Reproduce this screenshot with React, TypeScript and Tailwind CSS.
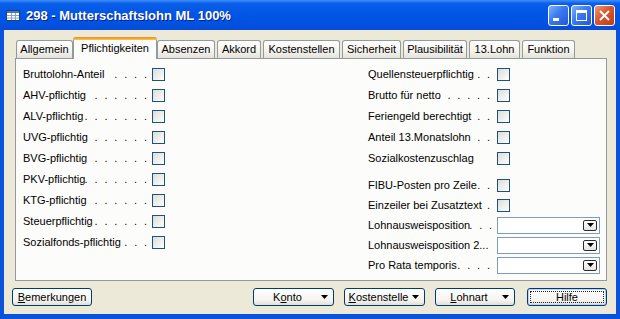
import React from "react";

const tabs = [
  { label: "Allgemein", className: "w-[57px]" },
  { label: "Pflichtigkeiten", className: "w-[84px]", active: true },
  { label: "Absenzen", className: "w-[58px]" },
  { label: "Akkord", className: "w-[44px] ml-[2px]" },
  { label: "Kostenstellen", className: "w-[77px] ml-[2px]" },
  { label: "Sicherheit", className: "w-[59px] ml-[2px]" },
  { label: "Plausibilität", className: "w-[64px] ml-[2px]" },
  { label: "13.Lohn", className: "w-[51px] ml-[2px]" },
  { label: "Funktion", className: "w-[53px] ml-[2px]" },
];

// label + number of leader dots shown after it
const leftRows: [string, number][] = [
  ["Bruttolohn-Anteil", 4],
  ["AHV-pflichtig", 6],
  ["ALV-pflichtig", 7],
  ["UVG-pflichtig", 6],
  ["BVG-pflichtig", 6],
  ["PKV-pflichtig", 7],
  ["KTG-pflichtig", 6],
  ["Steuerpflichtig", 6],
  ["Sozialfonds-pflichtig", 3],
];

const rightTop: [string, number][] = [
  ["Quellensteuerpflichtig", 2],
  ["Brutto für netto", 6],
  ["Feriengeld berechtigt", 2],
  ["Anteil 13.Monatslohn", 2],
  ["Sozialkostenzuschlag", 0],
];

const Arrow = () => (
  <svg width="7" height="4" viewBox="0 0 7 4" className="shrink-0">
    <path d="M0 0h7L3.5 4z" fill="#000" />
  </svg>
);

const Dots = ({ n, pad }: { n: number; pad: string }) => (
  <div className={`flex-1 min-w-0 flex justify-end ${pad}`}>
    {n > 0 && (
      <span className="whitespace-pre tracking-[1.9px]">{Array(n).fill(".").join(" ")}</span>
    )}
  </div>
);

const CheckBox = () => (
  <div className="w-[13px] h-[13px] shrink-0 border border-[#1c5180] bg-[linear-gradient(135deg,#dcdcd7,#f4f4f1_70%,#ffffff)]" />
);

const Row = ({ label, dots, pad, h = "h-[21px]", children }: { label: string; dots: number; pad: string; h?: string; children: React.ReactNode }) => (
  <div className={`flex items-center ${h}`}>
    <div className="w-[129px] flex items-center">
      <span className="whitespace-nowrap">{label}</span>
      <Dots n={dots} pad={pad} />
    </div>
    {children}
  </div>
);

const Combo = () => (
  <div className="w-[103px] h-[17px] border border-[#7f9db9] bg-white flex items-center justify-end pr-[2px]">
    <div className="w-[14px] h-[11px] rounded-[2px] border border-[#2b2b2b] bg-[linear-gradient(to_bottom,#ffffff,#e4e4e0)] flex items-center justify-center">
      <Arrow />
    </div>
  </div>
);

const Tab = ({ label, className, active }: { label: string; className: string; active?: boolean }) =>
  active ? (
    <div className={`relative z-10 h-[22px] ${className} flex flex-col rounded-t-[3px] border-x border-[#919b9c] bg-[#fcfcfa]`}>
      <div className="-mx-px h-[3px] rounded-t-[3px] bg-[linear-gradient(to_bottom,#e68b2c,#ffc73c)]" />
      <div className="flex-1 flex items-center justify-center pb-[2px]">{label}</div>
    </div>
  ) : (
    <div className={`mt-[3px] h-[18px] ${className} flex items-center justify-center rounded-t-[3px] border border-b-0 border-[#919b9c] bg-[linear-gradient(to_bottom,#ffffff,#f4f3ee_60%,#e4e2da)]`}>
      {label}
    </div>
  );

const btn = "h-[18px] flex items-center rounded-[3px] border border-[#003c74] bg-[linear-gradient(to_bottom,#ffffff,#f5f4f0_70%,#e2dfd5)]";

const MenuButton = ({ className, children }: { className: string; children: React.ReactNode }) => (
  <div className={`${btn} ${className}`}>
    <span className="flex-1 text-center whitespace-nowrap">{children}</span>
    <span className="mr-[5px]"><Arrow /></span>
  </div>
);

const CapButton = ({ kind }: { kind: "min" | "max" | "close" }) => (
  <div
    className={`w-[21px] h-[21px] rounded-[3px] border border-white ${
      kind === "close"
        ? "bg-[linear-gradient(135deg,#ee9a78,#d9572f_45%,#c23c15)]"
        : "bg-[linear-gradient(135deg,#7fb1fb,#3b79ee_45%,#2257d9)]"
    }`}
  >
    <svg width="19" height="19" viewBox="0 0 19 19">
      {kind === "min" && <rect x="4" y="12" width="6" height="3" fill="#fff" />}
      {kind === "max" && (
        <g fill="none" stroke="#fff">
          <rect x="4.5" y="4.5" width="10" height="10" />
          <rect x="4" y="4" width="11" height="3" fill="#fff" stroke="none" />
        </g>
      )}
      {kind === "close" && (
        <g stroke="#fff" strokeWidth="2">
          <path d="M5 5l9 9M14 5l-9 9" />
        </g>
      )}
    </svg>
  </div>
);

export default function App() {
  return (
    <div className="w-[620px] h-[319px] flex flex-col bg-[#0c53dc] font-['Liberation_Sans',Arial,sans-serif] text-[11px] text-black">
      {/* title bar */}
      <div className="h-[30px] shrink-0 flex items-center bg-[linear-gradient(to_bottom,#3d8ef7,#0a5eea_12%,#0055e5_50%,#0151e0_85%,#0a4bd2)]">
        <svg width="14" height="11" viewBox="0 0 14 11" className="ml-[6px]">
          <rect x="0.5" y="0.5" width="13" height="10" fill="#fff" stroke="#23407a" />
          <rect x="1" y="1" width="12" height="2" fill="#4a78c0" />
          <path d="M1 5.5h12M1 8h12M5.5 3v7M9.5 3v7" stroke="#8aa3c8" />
        </svg>
        <span className="ml-[6px] pt-[1px] text-[13px] font-bold text-white [text-shadow:1px_1px_0_#0a1e8a]">
          298 - Mutterschaftslohn ML 100%
        </span>
        <div className="ml-auto mr-[5px] flex gap-[2px]">
          <CapButton kind="min" />
          <CapButton kind="max" />
          <CapButton kind="close" />
        </div>
      </div>

      {/* frame + client */}
      <div className="flex-1 flex px-[4px] pb-[5px]">
        <div className="flex-1 flex flex-col bg-[#ece9d8] pt-[7px]">
          <div className="ml-[12px] h-[21px] flex items-start">
            {tabs.map((t) => (
              <Tab key={t.label} {...t} />
            ))}
          </div>

          <div className="ml-[11px] w-[592px] h-[223px] border border-[#919b9c] bg-[#fcfcfa] flex pt-[5px] pl-[7px]">
            <div className="w-[345px] flex flex-col">
              {leftRows.map(([l, n]) => (
                <Row key={l} label={l} dots={n} pad="pr-[3px]">
                  <CheckBox />
                </Row>
              ))}
            </div>
            <div className="w-[232px] flex flex-col">
              {rightTop.map(([l, n]) => (
                <Row key={l} label={l} dots={n} pad="pr-[5px]">
                  <CheckBox />
                </Row>
              ))}
              <div className="mt-[6px]">
                <Row label="FIBU-Posten pro Zeile" dots={2} pad="pr-[5px]" h="h-[20px]">
                  <CheckBox />
                </Row>
                <Row label="Einzeiler bei Zusatztext" dots={1} pad="pr-[5px]" h="h-[20px]">
                  <CheckBox />
                </Row>
                <Row label="Lohnausweisposition" dots={3} pad="pr-[3px]" h="h-[20px]">
                  <Combo />
                </Row>
                <Row label="Lohnausweisposition 2..." dots={0} pad="pr-[5px]" h="h-[20px]">
                  <Combo />
                </Row>
                <Row label="Pro Rata temporis" dots={4} pad="pr-[5px]" h="h-[20px]">
                  <Combo />
                </Row>
              </div>
            </div>
          </div>

          <div className="ml-[8px] w-[595px] mt-[7px] flex">
            <div className={`${btn} w-[80px] justify-center`}>
              <span><span className="underline">B</span>emerkungen</span>
            </div>
            <MenuButton className="ml-auto w-[81px]">
              K<span className="underline">o</span>nto
            </MenuButton>
            <MenuButton className="ml-[10px] w-[81px]">
              <span className="underline">K</span>ostenstelle
            </MenuButton>
            <MenuButton className="ml-[10px] w-[80px]">
              <span className="underline">L</span>ohnart
            </MenuButton>
            <div className={`${btn} ml-[12px] w-[80px] p-[2px] shadow-[inset_0_0_0_1px_#b9d1f5]`}>
              <div className="w-full h-full border border-dotted border-[#222] flex items-center justify-center">Hilfe</div>
            </div>
          </div>
        </div>
      </div>
    </div>
  );
}
